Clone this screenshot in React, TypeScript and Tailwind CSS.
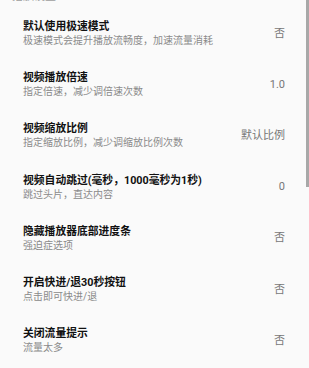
const items = [
  { title: '默认使用极速模式', desc: '极速模式会提升播放流畅度，加速流量消耗', value: '否' },
  { title: '视频播放倍速', desc: '指定倍速，减少调倍速次数', value: '1.0' },
  { title: '视频缩放比例', desc: '指定缩放比例，减少调缩放比例次数', value: '默认比例' },
  { title: '视频自动跳过(毫秒，1000毫秒为1秒)', desc: '跳过头片，直达内容', value: '0' },
  { title: '隐藏播放器底部进度条', desc: '强迫症选项', value: '否' },
  { title: '开启快进/退30秒按钮', desc: '点击即可快进/退', value: '否' },
  { title: '关闭流量提示', desc: '流量太多', value: '否' },
];

export default function App() {
  return (
    <div
      className="relative w-[309px] h-[368px] overflow-hidden bg-[#fafafa]"
      style={{ fontFamily: 'Roboto, "Noto Sans CJK SC", sans-serif' }}
    >
      <div className="-mt-[10px] h-[18px] pl-[12px] text-[11px] leading-[14px] text-[#9e9e9e]">播放设置</div>
      {items.map(item => (
        <div key={item.title} className="flex items-center h-[51.2px] pl-[23px] pr-[24px]">
          <div className="flex-1 min-w-0">
            <div className="text-[10.8px] leading-[14px] font-bold text-[#111]">{item.title}</div>
            <div className="text-[10px] leading-[13px] text-[#8a8a8a]">{item.desc}</div>
          </div>
          <div className="text-[11px] leading-[14px] text-[#777]">{item.value}</div>
        </div>
      ))}
      <div className="absolute right-0 top-0 w-[3px] h-[187px] bg-[#a8a8a8]" />
    </div>
  );
}
